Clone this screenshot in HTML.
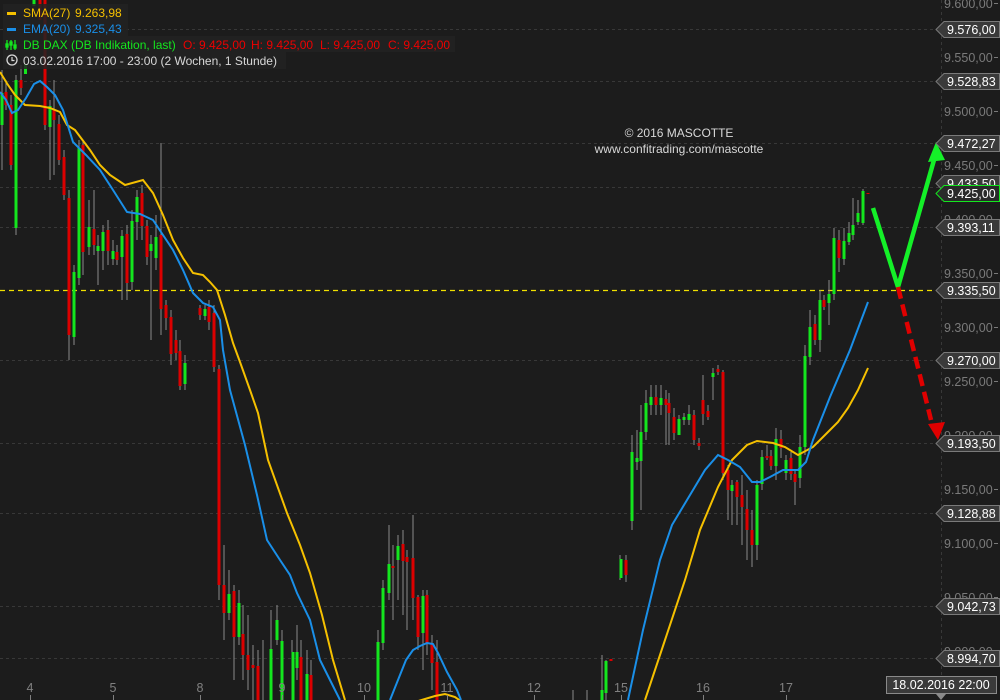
<!DOCTYPE html>
<html><head><meta charset="utf-8"><style>
html,body{margin:0;padding:0;background:#1c1c1c;width:1000px;height:700px;overflow:hidden}
svg{display:block;font-family:"Liberation Sans",sans-serif}
</style></head><body>
<svg width="1000" height="700" viewBox="0 0 1000 700">
<rect width="1000" height="700" fill="#1c1c1c"/>
<g stroke="#383838" stroke-width="1" stroke-dasharray="3,3">
<line x1="0" x2="940" y1="29.5" y2="29.5"/><line x1="0" x2="940" y1="81.5" y2="81.5"/><line x1="0" x2="940" y1="143.5" y2="143.5"/><line x1="0" x2="940" y1="187.5" y2="187.5"/><line x1="0" x2="940" y1="227.5" y2="227.5"/><line x1="0" x2="940" y1="360.5" y2="360.5"/><line x1="0" x2="940" y1="443.5" y2="443.5"/><line x1="0" x2="940" y1="513.5" y2="513.5"/><line x1="0" x2="940" y1="606.5" y2="606.5"/><line x1="0" x2="940" y1="658.5" y2="658.5"/>
<line x1="941.5" x2="941.5" y1="0" y2="700"/>
</g>
<line x1="0" x2="940" y1="290.5" y2="290.5" stroke="#f0e000" stroke-width="1.2" stroke-dasharray="5,4"/>
<g stroke="#8a8a8a" stroke-width="1">
<path d="M2 70V170M6 80V110M11 95V170M16 75V235M21 65V95M45 0V130M50 100V180M54 80V175M59 115V165M64 150V200M69 190V360M74 265V345M79 140V285M83 140V275M89 200V255M94 190V255M98 235V285M103 225V270M108 220V265M113 240V265M117 245V265M122 230V300M127 225V300M132 210V290M137 190V240M142 185V240M147 220V265M151 235V340M156 215V270M161 143V335M166 300V330M171 310V365M176 330V360M180 340V390M185 355V390M200 305V320M205 305V320M209 300V330M214 305V372M219 365V600M224 545V640M229 570V620M234 585V680M239 590V645M243 605V680M248 615V690M253 645V700M258 650V700M263 640V700M271 610V700M277 605V645M282 630V700M292 640V700M297 625V680M301 640V700M307 650V700M311 660V700M378 630V700M383 580V650M389 525V600M393 545V620M398 535V600M403 530V615M407 550V630M413 515V620M418 595V650M423 590V670M427 590V655M432 635V690M437 640V700M573 690V700M587 690V700M602 655V700M606 660V700M620 555V580M626 555V582M632 435V530M637 430V470M641 405V510M646 390V440M651 385V415M656 385V415M661 385V415M666 390V445M669 393V445M674 408V440M679 415V425M684 413V425M689 405V425M694 410V445M699 438V450M703 375V425M708 405V420M713 368V400M718 365V375M723 370V480M728 465V520M732 480V525M737 480V525M742 475V545M747 490V560M752 510V567M757 480V560M762 450V490M767 445V460M771 450V470M776 428V480M781 430V458M786 455V480M791 452V480M795 470V505M800 435V488M805 345V455M810 310V365M815 315V345M820 290V352M824 295V310M829 280V325M834 228V300M839 230V272M844 228V265M849 222V245M853 198V240M858 200V225M863 189V225"/>
</g>
<g fill="#14e61e">
<rect x="0.5" y="93" width="3" height="32"/><rect x="14.5" y="80" width="3" height="148"/><rect x="32.5" y="0" width="3" height="6"/><rect x="24" y="64" width="3" height="10"/><rect x="48.5" y="106" width="3" height="21"/><rect x="72.5" y="272" width="3" height="65"/><rect x="77.5" y="148" width="3" height="130"/><rect x="87.5" y="227" width="3" height="20"/><rect x="96.5" y="246" width="3" height="5"/><rect x="101.5" y="232" width="3" height="19"/><rect x="111.5" y="251" width="3" height="8"/><rect x="120.5" y="236" width="3" height="21"/><rect x="130.5" y="221" width="3" height="61"/><rect x="135.5" y="197" width="3" height="25"/><rect x="149.5" y="244" width="3" height="7"/><rect x="154.5" y="237" width="3" height="21"/><rect x="183.5" y="363" width="3" height="21"/><rect x="203.5" y="309" width="3" height="7"/><rect x="227.5" y="594" width="3" height="19"/><rect x="237.5" y="603" width="3" height="34"/><rect x="269.5" y="649" width="3" height="51"/><rect x="275.5" y="620" width="3" height="20"/><rect x="280.5" y="641" width="3" height="59"/><rect x="291.5" y="652" width="3" height="48"/><rect x="295.5" y="652" width="3" height="16"/><rect x="305.5" y="674" width="3" height="26"/><rect x="376.5" y="642" width="3" height="58"/><rect x="381.5" y="588" width="3" height="55"/><rect x="387.5" y="564" width="3" height="29"/><rect x="396.5" y="546" width="3" height="14"/><rect x="421.5" y="596" width="3" height="37"/><rect x="600.5" y="690" width="3" height="10"/><rect x="604.5" y="661" width="3" height="32"/><rect x="619.5" y="559" width="3" height="19"/><rect x="630.5" y="452" width="3" height="69"/><rect x="635.5" y="458" width="3" height="4"/><rect x="639.5" y="432" width="3" height="29"/><rect x="644.5" y="403" width="3" height="29"/><rect x="649.5" y="397" width="3" height="8"/><rect x="659.5" y="398" width="3" height="7"/><rect x="677.5" y="419" width="3" height="16"/><rect x="682.5" y="417" width="3" height="3"/><rect x="687.5" y="414" width="3" height="6"/><rect x="711.5" y="373" width="3" height="4"/><rect x="730.5" y="485" width="3" height="6"/><rect x="755.5" y="485" width="3" height="60"/><rect x="760.5" y="457" width="3" height="27"/><rect x="774.5" y="439" width="3" height="27"/><rect x="784.5" y="460" width="3" height="13"/><rect x="798.5" y="447" width="3" height="31"/><rect x="803.5" y="356" width="3" height="91"/><rect x="808.5" y="327" width="3" height="30"/><rect x="818.5" y="300" width="3" height="40"/><rect x="827.5" y="294" width="3" height="9"/><rect x="832.5" y="238" width="3" height="56"/><rect x="842.5" y="241" width="3" height="18"/><rect x="847.5" y="233" width="3" height="9"/><rect x="851.5" y="225" width="3" height="10"/><rect x="856.5" y="213" width="3" height="9"/><rect x="861.5" y="191" width="3" height="32"/>
</g>
<g fill="#dc0000">
<rect x="4.5" y="92" width="3" height="13"/><rect x="9.5" y="105" width="3" height="60"/><rect x="19.5" y="80" width="3" height="8"/><rect x="38.5" y="0" width="3" height="20"/><rect x="43.5" y="0" width="3" height="125"/><rect x="52.5" y="110" width="3" height="10"/><rect x="57.5" y="124" width="3" height="36"/><rect x="62.5" y="157" width="3" height="38"/><rect x="67.5" y="198" width="3" height="137"/><rect x="81.5" y="145" width="3" height="107"/><rect x="92.5" y="229" width="3" height="16"/><rect x="106.5" y="230" width="3" height="21"/><rect x="115.5" y="252" width="3" height="8"/><rect x="125.5" y="234" width="3" height="49"/><rect x="140.5" y="193" width="3" height="33"/><rect x="145.5" y="226" width="3" height="31"/><rect x="159.5" y="235" width="3" height="74"/><rect x="164.5" y="305" width="3" height="13"/><rect x="169.5" y="317" width="3" height="37"/><rect x="174.5" y="340" width="3" height="13"/><rect x="178.5" y="351" width="3" height="35"/><rect x="198.5" y="308" width="3" height="7"/><rect x="207.5" y="307" width="3" height="15"/><rect x="212.5" y="313" width="3" height="54"/><rect x="217.5" y="369" width="3" height="216"/><rect x="222.5" y="585" width="3" height="28"/><rect x="232.5" y="591" width="3" height="46"/><rect x="241.5" y="634" width="3" height="21"/><rect x="246.5" y="655" width="3" height="15"/><rect x="251.5" y="665" width="3" height="3"/><rect x="256.5" y="666" width="3" height="34"/><rect x="299.5" y="657" width="3" height="43"/><rect x="309.5" y="675" width="3" height="25"/><rect x="391.5" y="566" width="3" height="2"/><rect x="401.5" y="544" width="3" height="17"/><rect x="405.5" y="557" width="3" height="5"/><rect x="411.5" y="558" width="3" height="40"/><rect x="416.5" y="597" width="3" height="40"/><rect x="425.5" y="595" width="3" height="48"/><rect x="430.5" y="643" width="3" height="20"/><rect x="435.5" y="662" width="3" height="38"/><rect x="609.5" y="659" width="3" height="2"/><rect x="624.5" y="560" width="3" height="15"/><rect x="654.5" y="397" width="3" height="8"/><rect x="664.5" y="399" width="3" height="6"/><rect x="667.5" y="403" width="3" height="10"/><rect x="672.5" y="417" width="3" height="16"/><rect x="692.5" y="415" width="3" height="25"/><rect x="697.5" y="443" width="3" height="3"/><rect x="701.5" y="400" width="3" height="14"/><rect x="706.5" y="411" width="3" height="6"/><rect x="716.5" y="369" width="3" height="3"/><rect x="721.5" y="372" width="3" height="101"/><rect x="726.5" y="470" width="3" height="20"/><rect x="735.5" y="482" width="3" height="15"/><rect x="740.5" y="495" width="3" height="12"/><rect x="745.5" y="509" width="3" height="21"/><rect x="750.5" y="530" width="3" height="15"/><rect x="765.5" y="456" width="3" height="2"/><rect x="769.5" y="456" width="3" height="10"/><rect x="779.5" y="439" width="3" height="9"/><rect x="789.5" y="458" width="3" height="16"/><rect x="793.5" y="474" width="3" height="8"/><rect x="813.5" y="324" width="3" height="16"/><rect x="822.5" y="300" width="3" height="7"/><rect x="837.5" y="240" width="3" height="18"/><rect x="866.5" y="193" width="3" height="1"/>
</g>
<polyline fill="none" stroke="#f5c000" stroke-width="2" points="0,72 8,85 15,95 25,105 40,106 50,108 60,112 67,125 75,130 90,150 100,165 110,175 125,185 143,180 153,193 163,215 173,240 183,258 193,273 203,275 210,282 217,290 225,315 233,343 240,362 250,390 258,413 268,460 287,513 300,545 310,573 322,615 333,660 345,700"/>
<polyline fill="none" stroke="#f5c000" stroke-width="2" points="415,702 425,699 435,696 445,694 455,697 462,702"/>
<polyline fill="none" stroke="#f5c000" stroke-width="2" points="645,700 665,640 685,580 700,530 718,487 732,460 747,445 757,441 773,443 785,447 798,455 813,447 827,433 838,422 848,408 858,390 868,368"/>
<polyline fill="none" stroke="#1a8fe8" stroke-width="2" points="0,92 6,100 12,113 18,110 26,98 34,84 40,81 47,87 55,95 63,110 68,126 73,142 86,155 100,170 113,190 127,212 140,214 153,220 163,235 173,250 183,270 193,293 203,303 213,307 220,320 223,350 230,390 245,445 257,495 267,540 280,560 290,575 297,593 310,620 320,660 330,680 340,700"/>
<polyline fill="none" stroke="#1a8fe8" stroke-width="2" points="390,700 400,675 406,660 413,650 420,646 427,643 433,644 438,653 447,672 457,690 461,700"/>
<polyline fill="none" stroke="#1a8fe8" stroke-width="2" points="628,700 643,630 660,560 672,525 690,495 705,470 718,455 728,460 740,467 752,482 760,482 770,477 783,470 798,470 806,462 813,440 830,397 850,350 868,302"/>
<polyline fill="none" stroke="#14f028" stroke-width="4.5" stroke-linejoin="miter" points="873,208 898,287 934,160"/>
<polygon fill="#14f028" points="936,142 928,162 945,160"/>
<line x1="898" y1="287" x2="931" y2="420" stroke="#e00000" stroke-width="4.5" stroke-dasharray="12,6"/>
<polygon fill="#e00000" points="938,440 928,424 945,422"/>
<g fill="#7a7a7a" font-size="12.5">
<text x="944" y="8">9.600,00</text><text x="944" y="62">9.550,00</text><text x="944" y="116">9.500,00</text><text x="944" y="170">9.450,00</text><text x="944" y="224">9.400,00</text><text x="944" y="278">9.350,00</text><text x="944" y="332">9.300,00</text><text x="944" y="386">9.250,00</text><text x="944" y="440">9.200,00</text><text x="944" y="494">9.150,00</text><text x="944" y="548">9.100,00</text><text x="944" y="602">9.050,00</text><text x="944" y="656">9.000,00</text>
</g>
<g stroke="#7a7a7a"><path d="M994 3.5H998M994 57.5H998M994 111.5H998M994 165.5H998M994 219.5H998M994 273.5H998M994 327.5H998M994 381.5H998M994 435.5H998M994 489.5H998M994 543.5H998M994 597.5H998M994 651.5H998"/></g>
<g fill="#3a3a3a" stroke="#7a7a7a" stroke-width="1">
<path d="M936 29.5L944 21.5H999.5V37.5H944Z"/><path d="M936 81.5L944 73.5H999.5V89.5H944Z"/><path d="M936 143.5L944 135.5H999.5V151.5H944Z"/><path d="M936 183.5L944 175.5H999.5V191.5H944Z"/><path d="M936 227.5L944 219.5H999.5V235.5H944Z"/><path d="M936 290.5L944 282.5H999.5V298.5H944Z"/><path d="M936 360.5L944 352.5H999.5V368.5H944Z"/><path d="M936 443.5L944 435.5H999.5V451.5H944Z"/><path d="M936 513.5L944 505.5H999.5V521.5H944Z"/><path d="M936 606.5L944 598.5H999.5V614.5H944Z"/><path d="M936 658.5L944 650.5H999.5V666.5H944Z"/>
</g>
<g fill="#ffffff" font-size="12.5">
<text x="947" y="34">9.576,00</text><text x="947" y="86">9.528,83</text><text x="947" y="148">9.472,27</text><text x="947" y="188">9.433,50</text><text x="947" y="232">9.393,11</text><text x="947" y="295">9.335,50</text><text x="947" y="365">9.270,00</text><text x="947" y="448">9.193,50</text><text x="947" y="518">9.128,88</text><text x="947" y="611">9.042,73</text><text x="947" y="663">8.994,70</text>
</g>
<path d="M936 193.5L944 185.5H999.5V201.5H944Z" fill="#2a2a2a" stroke="#14e61e"/>
<text x="947" y="198" fill="#fff" font-size="12.5">9.425,00</text>
<g fill="#808080" font-size="12.5" text-anchor="middle">
<text x="30" y="692">4</text><text x="113" y="692">5</text><text x="200" y="692">8</text><text x="282" y="692">9</text><text x="364" y="692">10</text><text x="447" y="692">11</text><text x="534" y="692">12</text><text x="621" y="692">15</text><text x="703" y="692">16</text><text x="786" y="692">17</text>
</g>
<g stroke="#808080"><path d="M30.5 695V700M113.5 695V700M200.5 695V700M282.5 695V700M364.5 695V700M447.5 695V700M534.5 695V700M621.5 695V700M703.5 695V700M786.5 695V700"/></g>
<rect x="886.5" y="676.5" width="110" height="17" fill="#3a3a3a" stroke="#8a8a8a"/>
<path d="M936 694L941 700L946 694Z" fill="#8a8a8a"/>
<text x="941" y="689" fill="#fff" font-size="12.5" text-anchor="middle">18.02.2016 22:00</text>
<g fill="#d8d8d8" font-size="12" text-anchor="middle">
<text x="679" y="137">© 2016 MASCOTTE</text><text x="679" y="153">www.confitrading.com/mascotte</text>
</g>
<rect x="3" y="4" width="125" height="32" fill="#222" opacity="0.85"/>
<rect x="3" y="36" width="452" height="16" fill="#222" opacity="0.85"/>
<rect x="3" y="52" width="283" height="17" fill="#222" opacity="0.85"/>
<rect x="7" y="12" width="9" height="3" fill="#f5c000"/>
<rect x="7" y="28" width="9" height="3" fill="#1a8fe8"/>
<g font-size="12">
<text x="23" y="17" fill="#f5c000">SMA(27)</text><text x="75" y="17" fill="#f5c000">9.263,98</text>
<text x="23" y="33" fill="#1a8fe8">EMA(20)</text><text x="75" y="33" fill="#1a8fe8">9.325,43</text>
<text x="23" y="49" fill="#14e61e">DB DAX (DB Indikation, last)</text>
<text x="183" y="49" fill="#ee0000">O: 9.425,00</text>
<text x="251" y="49" fill="#ee0000">H: 9.425,00</text>
<text x="320" y="49" fill="#ee0000">L: 9.425,00</text>
<text x="388" y="49" fill="#ee0000">C: 9.425,00</text>
<text x="23" y="65" fill="#d8d8d8">03.02.2016 17:00 - 23:00 (2 Wochen, 1 Stunde)</text>
</g>
<g stroke="#14e61e" stroke-width="1.3" fill="none"><path d="M7 40V50M11 40V50M15 40V50"/><rect x="6" y="44" width="2" height="3"/><rect x="10" y="42" width="2" height="3"/><rect x="14" y="45" width="2" height="3"/></g>
<circle cx="12" cy="60" r="5" fill="none" stroke="#d8d8d8" stroke-width="1.3"/>
<path d="M12 57V60.5H14.5" fill="none" stroke="#d8d8d8" stroke-width="1.2"/>
</svg>
</body></html>
